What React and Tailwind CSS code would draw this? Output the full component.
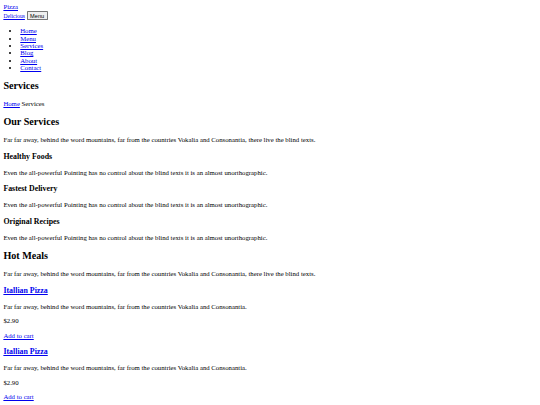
import React from "react";

const serif = "font-['Liberation_Serif','Times_New_Roman',serif]";
const link = "text-[#0000ee] underline";
const h2 = "text-[24px] font-bold my-[19.92px] leading-[1.15]";
const h3 = "text-[18.72px] font-bold my-[18.72px] leading-[1.15]";
const p = "my-4";

function Item({ title, text }) {
  return (
    <>
      <h3 className={h3}>
        <a href="#" className={link}>{title}</a>
      </h3>
      <p className={p}>{text}</p>
      <p className={p}>$2.90</p>
      <p className={p}>
        <a href="#" className={link}>Add to cart</a>
      </p>
    </>
  );
}

export default function App() {
  return (
    <div className="[zoom:0.421875] bg-white text-black">
      <div className={`${serif} text-[16px] leading-[1.15] m-2`}>
        <nav>
          <a href="#" className={link}>
            Pizza
            <br />
            <small className="text-[13.33px]">Delicious</small>
          </a>{" "}
          <button className="font-['Liberation_Sans',Arial,sans-serif] text-[13.33px] leading-[1.15] bg-[#efefef] border-2 border-[#767676] rounded-[2px] px-[6px] py-[1px] text-black">
            Menu
          </button>
          <ul className="list-disc pl-10 my-4 leading-[17.5px]">
            {["Home", "Menu", "Services", "Blog", "About", "Contact"].map((t) => (
              <li key={t}>
                <a href="#" className={link}>{t}</a>
              </li>
            ))}
          </ul>
        </nav>
        <section>
          <h2 className={h2}>Services</h2>
          <p className={p}>
            <a href="#" className={link}>Home</a> <span>Services</span>
          </p>
        </section>
        <section>
          <h2 className={h2}>Our Services</h2>
          <p className={p}>
            Far far away, behind the word mountains, far from the countries Vokalia and Consonantia, there live the blind texts.
          </p>
          <h3 className={h3}>Healthy Foods</h3>
          <p className={p}>
            Even the all-powerful Pointing has no control about the blind texts it is an almost unorthographic.
          </p>
          <h3 className={h3}>Fastest Delivery</h3>
          <p className={p}>
            Even the all-powerful Pointing has no control about the blind texts it is an almost unorthographic.
          </p>
          <h3 className={h3}>Original Recipes</h3>
          <p className={p}>
            Even the all-powerful Pointing has no control about the blind texts it is an almost unorthographic.
          </p>
        </section>
        <section>
          <h2 className={h2}>Hot Meals</h2>
          <p className={p}>
            Far far away, behind the word mountains, far from the countries Vokalia and Consonantia, there live the blind texts.
          </p>
          <Item
            title="Itallian Pizza"
            text="Far far away, behind the word mountains, far from the countries Vokalia and Consonantia."
          />
          <Item
            title="Itallian Pizza"
            text="Far far away, behind the word mountains, far from the countries Vokalia and Consonantia."
          />
        </section>
      </div>
    </div>
  );
}
